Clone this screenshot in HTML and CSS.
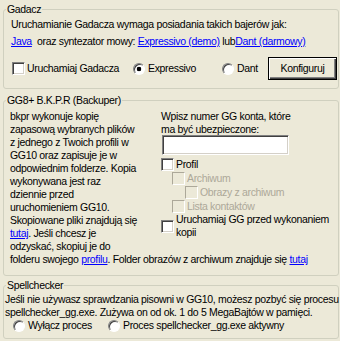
FILE: index.html
```html
<!DOCTYPE html>
<html lang="pl">
<head>
    <meta charset="UTF-8">
    <meta name="viewport" content="width=device-width, initial-scale=1.0">
    <title>Ustawienia</title>
    <link rel="stylesheet" href="styles.css">
</head>
<body>
    <fieldset class="group" id="gadaczGroup">
        <legend>Gadacz</legend>
        <div class="inner">
            <p>Uruchamianie Gadacza wymaga posiadania takich bajerów jak:</p>
            <p class="links"><a href="#">Java</a>&nbsp; oraz syntezator mowy: <a href="#">Expressivo (demo)</a> lub<a href="#">Dant (darmowy)</a></p>
            <div class="opt-row">
                <label class="opt opt-gadacz"><span class="check"></span>Uruchamiaj Gadacza</label>
                <label class="opt opt-expr"><span class="radio checked"></span>Expressivo</label>
                <label class="opt opt-dant"><span class="radio"></span>Dant</label>
                <button class="btn">Konfiguruj</button>
            </div>
        </div>
    </fieldset>

    <fieldset class="group" id="backupGroup">
        <legend>GG8+ B.K.P.R (Backuper)</legend>
        <div class="inner">
            <div class="cols">
                <p class="desc">bkpr wykonuje kopię<br>zapasową wybranych plików<br>z jednego z Twoich profili w<br>GG10 oraz zapisuje je w<br>odpowiednim folderze. Kopia<br>wykonywana jest raz<br>dziennie przed<br>uruchomieniem GG10.<br>Skopiowane pliki znajdują się<br><a href="#">tutaj</a>. Jeśli chcesz je<br>odzyskać, skopiuj je do</p>
                <div class="form">
                    <p>Wpisz numer GG konta, które<br>ma być ubezpieczone:</p>
                    <input type="text" class="edit">
                    <label class="opt row first"><span class="check"></span>Profil</label>
                    <label class="opt row off lvl1"><span class="check"></span>Archiwum</label>
                    <label class="opt row off lvl2"><span class="check"></span>Obrazy z archiwum</label>
                    <label class="opt row off lvl1"><span class="check"></span>Lista kontaktów</label>
                    <label class="opt multi"><span class="check"></span><span>Uruchamiaj GG przed wykonaniem<br>kopii</span></label>
                </div>
            </div>
            <p>folderu swojego <a href="#">profilu</a>. Folder obrazów z archiwum znajduje się <a href="#">tutaj</a></p>
        </div>
    </fieldset>

    <fieldset class="group" id="spellGroup">
        <legend>Spellchecker</legend>
        <div class="inner">
            <p>Jeśli nie używasz sprawdzania pisowni w GG10, możesz pozbyć się procesu<br>spellchecker_gg.exe. Zużywa on od ok. 1 do 5 MegaBajtów w pamięci.</p>
            <div class="spell-row">
                <label class="opt opt-off"><span class="radio"></span>Wyłącz proces</label>
                <label class="opt"><span class="radio"></span>Proces spellchecker_gg.exe aktywny</label>
            </div>
        </div>
    </fieldset>
</body>
</html>
```

FILE: styles.css
```css
body {
    margin: 0;
    width: 340px;
    background-color: #ece9d8;
    font-family: "Liberation Sans", Arial, sans-serif;
    font-size: 10.5px;
    letter-spacing: -0.33px;
    line-height: 13px;
    color: #000;
}

p {
    margin: 0;
    white-space: nowrap;
}

a {
    color: #0000ff;
    text-decoration: underline;
}

.group {
    margin: 0 1px 0 3px;
    padding: 0;
    min-width: 0;
    border: 1px solid #d0d0bf;
    border-radius: 3px;
}

.group legend {
    margin-left: 2px;
    padding: 0 1px;
}

#gadaczGroup {
    margin-top: 3px;
}
#backupGroup {
    margin-top: 5px;
}
#spellGroup {
    margin-top: 3px;
}

#gadaczGroup .inner {
    padding: 2px 0 8px 7px;
}
#backupGroup .inner {
    padding: 3px 0 9px 6px;
}
#spellGroup .inner {
    padding: 1px 0 6px 1px;
}

.links {
    margin-top: 4px;
}

.opt {
    display: flex;
    align-items: center;
    white-space: nowrap;
}

.opt-row {
    display: flex;
    align-items: center;
    height: 23px;
    margin-top: 9px;
}
.opt-gadacz {
    width: 121px;
    padding-left: 1px;
}
.opt-expr {
    width: 89px;
}
.opt-dant {
    width: 46px;
}

.check {
    flex: none;
    width: 13px;
    height: 13px;
    box-sizing: border-box;
    margin-right: 2px;
    border: 1px solid;
    border-color: #808080 #fff #fff #808080;
    box-shadow: inset 1px 1px #404040, inset -1px -1px #d4d0c8;
    background-color: #fff;
}

.radio {
    flex: none;
    width: 12px;
    height: 12px;
    box-sizing: border-box;
    margin-right: 3px;
    border: 1px solid;
    border-color: #808080 #fff #fff #808080;
    border-radius: 50%;
    box-shadow: inset 1px 1px #404040;
    background-color: #fff;
}
.radio.checked {
    background: radial-gradient(circle, #000 2px, #fff 2.6px);
}

.btn {
    width: 69px;
    height: 23px;
    padding: 0;
    font: inherit;
    letter-spacing: inherit;
    color: #000;
    background-color: #ece9d8;
    border: 1px solid #000;
    box-shadow: inset 1px 1px #fff, inset -1px -1px #404040, inset -2px -2px #808080;
}

.cols {
    display: grid;
    grid-template-columns: 151px 1fr;
}

.edit {
    display: block;
    width: 127px;
    height: 20px;
    box-sizing: border-box;
    margin: -1px 0 0 1px;
    padding: 0;
    border: 1px solid;
    border-color: #808080 #fff #fff #808080;
    box-shadow: inset 1px 1px #404040, inset -1px -1px #d4d0c8;
    background-color: #fff;
}

.row {
    height: 14px;
}
.row.first {
    margin-top: 2px;
}
.lvl1 {
    padding-left: 11px;
}
.lvl2 {
    padding-left: 24px;
}

.off {
    color: #aca899;
}
.off .check {
    border-color: #aca899 #fff #fff #aca899;
    box-shadow: none;
    background-color: #ece9d8;
}

.spell-row {
    display: flex;
    align-items: center;
    height: 13px;
}
.opt-off {
    width: 95px;
    margin-left: 8px;
}
```
